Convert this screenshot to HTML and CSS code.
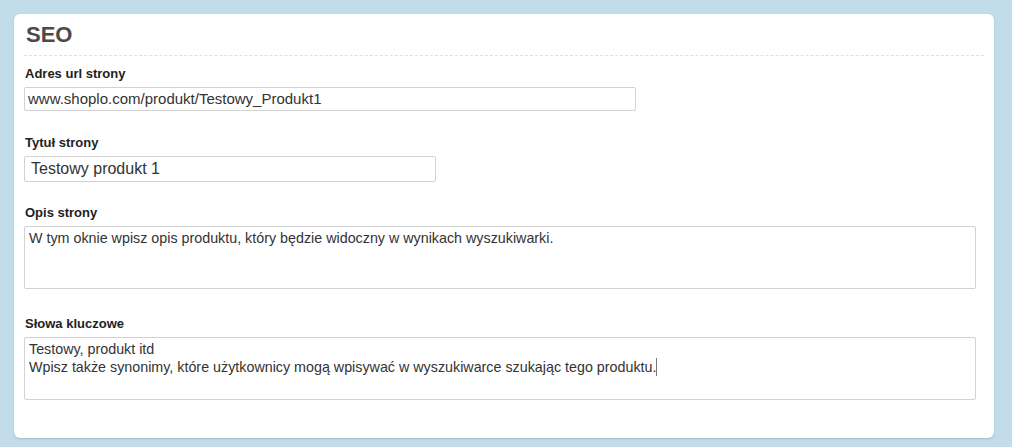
FILE: index.html
```html
<!DOCTYPE html>
<html lang="pl">
<head>
<meta charset="utf-8">
<title>SEO</title>
<link rel="stylesheet" href="styles.css">
</head>
<body>
<section class="card">
  <h2 class="card-title">SEO</h2>
  <div class="form-row">
    <label class="label">Adres url strony</label>
    <div class="field field-url">www.shoplo.com/produkt/Testowy_Produkt1</div>
  </div>
  <div class="form-row">
    <label class="label">Tytuł strony</label>
    <div class="field field-title">Testowy produkt 1</div>
  </div>
  <div class="form-row">
    <label class="label">Opis strony</label>
    <div class="field field-area">W tym oknie wpisz opis produktu, który będzie widoczny w wynikach wyszukiwarki.</div>
  </div>
  <div class="form-row">
    <label class="label">Słowa kluczowe</label>
    <div class="field field-area">Testowy, produkt itd<br>Wpisz także synonimy, które użytkownicy mogą wpisywać w wyszukiwarce szukając tego produktu.<span class="caret"></span></div>
  </div>
</section>
</body>
</html>
```
FILE: styles.css
```css
html, body {
  margin: 0;
  padding: 0;
}
body {
  background: #c3dcea;
  padding: 14px;
  font-family: "Liberation Sans", Arial, Helvetica, sans-serif;
  color: #333;
}
.card {
  box-sizing: border-box;
  width: 980px;
  height: 424px;
  background: #fff;
  border-radius: 6px;
  box-shadow: 0 1px 2px rgba(90, 120, 140, 0.35);
  padding: 8px 10px 0 10px;
}
.card-title {
  margin: 0;
  font-size: 22px;
  line-height: 26px;
  font-weight: bold;
  color: #4a4a4a;
  padding: 0 0 7px 2px;
  border-bottom: 1px dashed #e0e0e0;
}
.form-row {
  display: flex;
  flex-direction: column;
  align-items: flex-start;
}
.form-row:nth-child(2) { margin-top: 10px; }
.form-row:nth-child(3) { margin-top: 24px; }
.form-row:nth-child(4) { margin-top: 23px; }
.form-row:nth-child(5) { margin-top: 27px; }
.label {
  display: block;
  font-size: 13px;
  line-height: 16px;
  font-weight: bold;
  color: #222;
  padding-left: 1px;
  margin-bottom: 5px;
}
.field {
  box-sizing: border-box;
  background: #fff;
  border: 1px solid #d2d2d2;
  border-radius: 2px;
  color: #333;
  white-space: nowrap;
}
.field-url {
  width: 612px;
  height: 24px;
  font-size: 15px;
  line-height: 22px;
  padding: 0 3px;
}
.field-title {
  width: 412px;
  height: 26px;
  font-size: 16px;
  line-height: 24px;
  padding: 0 6px;
}
.field-area {
  width: 952px;
  height: 63px;
  font-size: 14.3px;
  line-height: 17px;
  padding: 3px 4px;
}
.caret {
  display: inline-block;
  width: 1px;
  height: 18px;
  background: #777;
  vertical-align: -4px;
}
```
